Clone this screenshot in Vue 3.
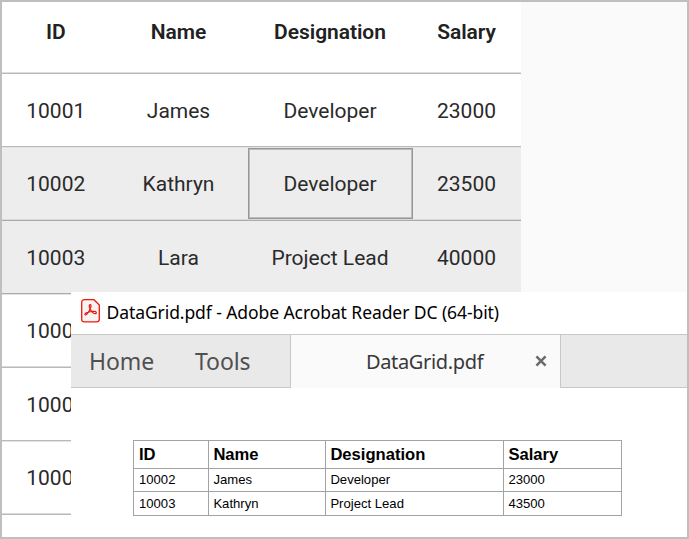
<script setup>
const columns = ['ID', 'Name', 'Designation', 'Salary']
const rows = [
  { cells: ['10001', 'James', 'Developer', '23000'] },
  { cells: ['10002', 'Kathryn', 'Developer', '23500'], selected: true, current: 2 },
  { cells: ['10003', 'Lara', 'Project Lead', '40000'], selected: true },
  { cells: ['10004', '', '', ''] },
  { cells: ['10005', '', '', ''] },
  { cells: ['10006', '', '', ''] },
]
const pdfRows = [
  ['10002', 'James', 'Developer', '23000'],
  ['10003', 'Kathryn', 'Project Lead', '43500'],
]
</script>

<template>
  <main class="frame">
    <section class="grid">
      <div class="row head">
        <div v-for="c in columns" :key="c" class="cell"><span>{{ c }}</span></div>
      </div>
      <div
        v-for="(r, i) in rows"
        :key="i"
        class="row"
        :class="{ tall: i % 2 === 1, selected: r.selected }"
      >
        <div v-for="(c, j) in r.cells" :key="j" class="cell" :class="{ current: r.current === j }">
          <span>{{ c }}</span>
        </div>
      </div>
    </section>

    <section class="window">
      <header class="titlebar">
        <svg class="logo" width="19" height="24" viewBox="0 0 19 24">
          <path d="M3.5 .7H13L18.3 6V20.5Q18.3 22.8 15.5 22.8H3.5Q.7 22.8 .7 20.5V3.5Q.7 .7 3.5 .7Z" fill="#f6f3f3" stroke="#f0180c" stroke-width="1.3" />
          <path d="M9.2 5.6C7.8 5.7 8.1 8 9 9.7C10.3 12.2 12.7 14.7 14.3 14.7C15.9 14.7 15.7 12.7 13.6 12.4C10.3 12.1 6.5 13 4.8 14C3.1 15.1 4 16.6 5.4 15.6C7.2 14.2 9 10.4 9.8 8C10.2 6.5 10 5.6 9.2 5.6Z" fill="none" stroke="#e8180e" stroke-width="1.2" />
        </svg>
        <span class="title">DataGrid.pdf - Adobe Acrobat Reader DC (64-bit)</span>
      </header>
      <nav class="tabs">
        <div class="menu">
          <span class="home">Home</span>
          <span class="tools">Tools</span>
        </div>
        <div class="tab">
          <span class="file">DataGrid.pdf</span>
          <svg class="close" width="12" height="12" viewBox="0 0 12 12">
            <path d="M1.4 1.4L10.6 10.6M10.6 1.4L1.4 10.6" stroke="#6b6b6b" stroke-width="2.5" />
          </svg>
        </div>
        <div class="rest"></div>
      </nav>
      <div class="page">
        <div class="pdf">
          <div v-for="c in columns" :key="c" class="th">{{ c }}</div>
          <template v-for="(r, i) in pdfRows" :key="i">
            <div v-for="(c, j) in r" :key="j" class="td" :class="{ last: i === 1 }">{{ c }}</div>
          </template>
        </div>
      </div>
    </section>
  </main>
</template>

<style>
body {
  margin: 0;
}
</style>

<style scoped>
* {
  box-sizing: border-box;
}
.frame {
  position: relative;
  width: 689px;
  height: 539px;
  border: 2px solid #bfbfbf;
  background: #fafafa;
  overflow: hidden;
}
.grid {
  width: 519px;
  height: 535px;
  background: #fff;
  overflow: hidden;
  font-family: Roboto, sans-serif;
  font-size: 21px;
  color: #2a2a2a;
}
.row {
  display: grid;
  grid-template-columns: 107px 139px 164px 109px;
  height: 73px;
  border-bottom: 1px solid #b9b9b9;
  background: #fff;
}
.row.head {
  height: 72px;
  font-weight: 600;
  letter-spacing: -0.05px;
  color: #212121;
  box-shadow: inset 0 -1px #dedede;
}
.row.head .cell {
  padding-bottom: 11px;
}
.row:not(.head):not(.tall) .cell {
  padding-top: 2px;
}
.row.tall {
  height: 74px;
  box-shadow: inset 0 1px #e4e4e4, inset 0 -1px #dadada;
}
.row.selected {
  background: #ededed;
  border-bottom-color: #ababab;
}
.cell {
  display: flex;
  align-items: center;
  justify-content: center;
  white-space: nowrap;
}
.cell:first-child {
  padding-left: 0.5px;
}
.cell.current {
  margin: 1px -1px 1px 0;
  padding-right: 1px;
  border: 1px solid #969696;
  outline: 1px solid #bdbdbd;
  outline-offset: -2px;
}
.window {
  position: absolute;
  left: 69px;
  top: 290px;
  width: 616px;
  height: 245px;
  background: #fff;
  font-family: 'Noto Sans', 'Open Sans', sans-serif;
}
.titlebar {
  display: flex;
  height: 42px;
  padding-left: 10px;
}
.logo {
  margin-top: 7px;
}
.title {
  margin-left: 6.5px;
  font-size: 17.5px;
  letter-spacing: -0.08px;
  line-height: 41px;
  white-space: nowrap;
  color: #000;
}
.tabs {
  display: flex;
  height: 54px;
  border-top: 1px solid #c8c8c8;
}
.menu {
  display: flex;
  width: 219px;
  padding-left: 18px;
  background: #e9e9e9;
  border-bottom: 1px solid #c8c8c8;
  font-size: 23px;
  letter-spacing: -0.1px;
  line-height: 52px;
  color: #505050;
}
.home {
  width: 106px;
}
.tab {
  display: flex;
  align-items: center;
  width: 271px;
  padding-left: 75px;
  background: #fafafa;
  border: solid #c8c8c8;
  border-width: 0 1px;
}
.file {
  width: 169px;
  font-size: 20px;
  letter-spacing: -0.35px;
  color: #383838;
}
.close {
  margin-bottom: 1px;
}
.rest {
  flex: 1;
  background: #e9e9e9;
  border-bottom: 1px solid #c8c8c8;
}
.page {
  padding: 52px 0 0 62px;
}
.pdf {
  display: grid;
  grid-template-columns: 75px 117px 178px 118px;
  grid-template-rows: 28px 23px 24px;
  width: 489px;
  border: solid #a3a3a3;
  border-width: 1px 0 0 1px;
  font-family: 'Liberation Sans', Arial, sans-serif;
  color: #000;
}
.th,
.td {
  padding-left: 4.4px;
  border: solid #a3a3a3;
  border-width: 0 1px 1px 0;
  white-space: nowrap;
}
.th:nth-child(4n + 1),
.td:nth-child(4n + 1) {
  padding-left: 5px;
}
.th {
  font-size: 16.6px;
  font-weight: 700;
  line-height: 27px;
}
.td {
  font-size: 13.1px;
  line-height: 22px;
}
.td.last {
  line-height: 24px;
}
</style>
